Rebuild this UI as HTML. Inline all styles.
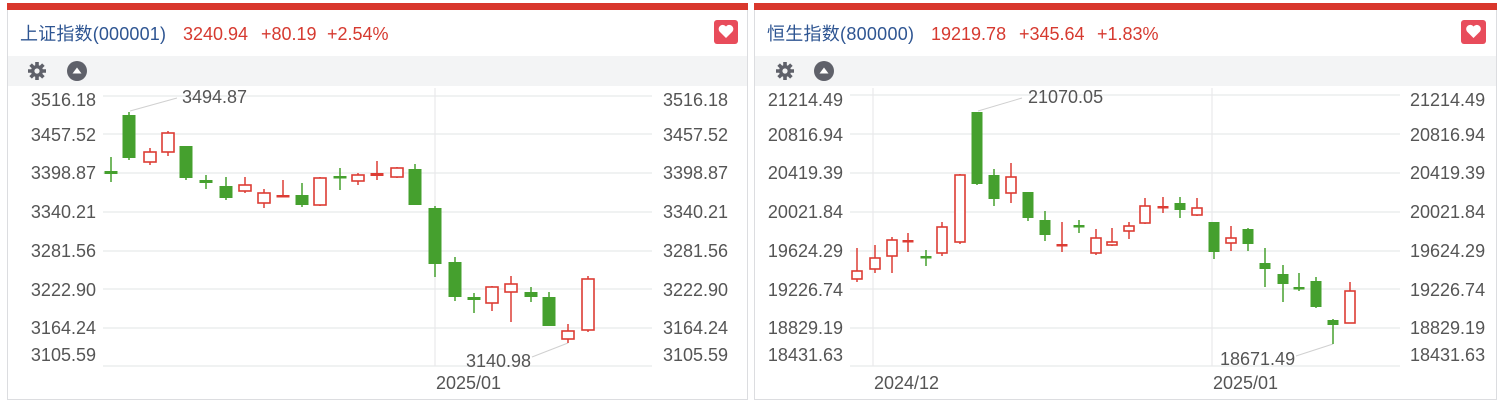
<!DOCTYPE html>
<html><head><meta charset="utf-8"><style>
body{margin:0;background:#fff;width:1500px;height:409px;overflow:hidden}
svg{display:block;font-family:"Liberation Sans","Noto Sans CJK SC",sans-serif}
.ax{font-size:18px;fill:#555}
.g{fill:#45a02e}
.w{stroke:#45a02e;stroke-width:1.5}
.r{fill:#fff;stroke:#dc3c34;stroke-width:1.6}
.rw{stroke:#dc3c34;stroke-width:1.5}
.grid{stroke:#e8e9eb;stroke-width:1.2}
.tt{font-size:18px;fill:#2e5592}
.tr{font-size:18px;fill:#d63a30}
</style></head><body>
<svg width="1500" height="409" viewBox="0 0 1500 409">
<defs>
<g id="gear"><circle r="6" fill="#5f616a"/><g stroke="#5f616a" stroke-width="3.6"><line x1="0" y1="-9" x2="0" y2="9"/><line x1="-9" y1="0" x2="9" y2="0"/><line x1="-6.4" y1="-6.4" x2="6.4" y2="6.4"/><line x1="-6.4" y1="6.4" x2="6.4" y2="-6.4"/></g><circle r="2.6" fill="#f3f4f5"/></g>
<g id="up"><circle r="10" fill="#5f616a"/><path d="M-4.5 2.5 L0 -3.5 L4.5 2.5 Z" fill="#fff"/></g>
</defs>
<rect x="7.5" y="4.5" width="740" height="395" fill="#fff" stroke="#dcdde0"/>
<rect x="754.5" y="4.5" width="742" height="395" fill="#fff" stroke="#dcdde0"/>
<rect x="7" y="3" width="741" height="7" fill="#d9372c"/>
<rect x="754" y="3" width="743" height="7" fill="#d9372c"/>
<rect x="8" y="56" width="739" height="30" fill="#f3f4f5"/>
<rect x="755" y="56" width="741" height="30" fill="#f3f4f5"/>
<use href="#gear" x="37" y="71"/><use href="#up" x="77" y="71"/>
<use href="#gear" x="785" y="71"/><use href="#up" x="824" y="71"/>
<text class="tt" x="20" y="40" textLength="146">上证指数(000001)</text>
<text class="tr" x="183" y="40">3240.94</text><text class="tr" x="261" y="40">+80.19</text><text class="tr" x="327" y="40">+2.54%</text>
<text class="tt" x="767" y="40" textLength="147">恒生指数(800000)</text>
<text class="tr" x="931" y="40">19219.78</text><text class="tr" x="1019" y="40">+345.64</text><text class="tr" x="1097" y="40">+1.83%</text>
<rect x="714" y="20" width="24" height="24" rx="3" fill="#e84c5b"/>
<path d="M726 38 L719.5 31.5 A3.6 3.6 0 0 1 726 26.5 A3.6 3.6 0 0 1 732.5 31.5 Z" fill="#fff"/>
<rect x="1461" y="20" width="25" height="24" rx="3" fill="#e84c5b"/>
<path d="M1473.5 38 L1467 31.5 A3.6 3.6 0 0 1 1473.5 26.5 A3.6 3.6 0 0 1 1480 31.5 Z" fill="#fff"/>

<g class="grid">
<line x1="103" y1="96" x2="652" y2="96"/><line x1="103" y1="134" x2="652" y2="134"/><line x1="103" y1="173" x2="652" y2="173"/><line x1="103" y1="212" x2="652" y2="212"/><line x1="103" y1="251" x2="652" y2="251"/><line x1="103" y1="289" x2="652" y2="289"/><line x1="103" y1="328" x2="652" y2="328"/><line x1="103" y1="366" x2="652" y2="366"/>
<line x1="435" y1="88" x2="435" y2="366"/>
</g>
<g class="ax" text-anchor="end">
<text x="96" y="106">3516.18</text><text x="96" y="141">3457.52</text><text x="96" y="179">3398.87</text><text x="96" y="218">3340.21</text><text x="96" y="257">3281.56</text><text x="96" y="296">3222.90</text><text x="96" y="334">3164.24</text><text x="96" y="361">3105.59</text>
</g>
<g class="ax">
<text x="663" y="106">3516.18</text><text x="663" y="141">3457.52</text><text x="663" y="179">3398.87</text><text x="663" y="218">3340.21</text><text x="663" y="257">3281.56</text><text x="663" y="296">3222.90</text><text x="663" y="334">3164.24</text><text x="663" y="361">3105.59</text>
<text x="436" y="389">2025/01</text>
<text x="182" y="103">3494.87</text>
<text x="466" y="367">3140.98</text>
</g>
<line x1="130" y1="111" x2="177" y2="98" stroke="#d0d0d0"/>
<line x1="568" y1="343" x2="532" y2="357" stroke="#d0d0d0"/>
<g>
<line class="w" x1="111" y1="157" x2="111" y2="182"/><rect class="g" x="104.5" y="171" width="13" height="3"/>
<line class="w" x1="129" y1="112" x2="129" y2="160"/><rect class="g" x="122.5" y="115" width="13" height="43"/>
<line class="rw" x1="150" y1="148" x2="150" y2="165"/><rect class="r" x="144" y="152" width="12" height="10"/>
<line class="rw" x1="168" y1="131" x2="168" y2="156"/><rect class="r" x="162" y="133" width="12" height="19"/>
<line class="w" x1="186" y1="146" x2="186" y2="180"/><rect class="g" x="179.5" y="146" width="13" height="32"/>
<line class="w" x1="206" y1="175" x2="206" y2="189"/><rect class="g" x="199.5" y="180" width="13" height="3"/>
<line class="w" x1="226" y1="177" x2="226" y2="200"/><rect class="g" x="219.5" y="186" width="13" height="12"/>
<line class="rw" x1="245" y1="177" x2="245" y2="193"/><rect class="r" x="239" y="185" width="12" height="6"/>
<line class="rw" x1="264" y1="189" x2="264" y2="208"/><rect class="r" x="258" y="193" width="12" height="10"/>
<line class="rw" x1="283" y1="180" x2="283" y2="197"/><rect x="276.5" y="195" width="13" height="2.5" fill="#dc3c34"/>
<line class="w" x1="302" y1="183" x2="302" y2="207"/><rect class="g" x="295.5" y="195" width="13" height="10"/>
<line class="rw" x1="320" y1="177" x2="320" y2="206"/><rect class="r" x="314" y="178" width="12" height="27"/>
<line class="w" x1="340" y1="168" x2="340" y2="190"/><rect class="g" x="333.5" y="176" width="13" height="2.5"/>
<line class="rw" x1="358" y1="173" x2="358" y2="185"/><rect class="r" x="352" y="175" width="12" height="6"/>
<line class="rw" x1="377" y1="161" x2="377" y2="180"/><rect x="370.5" y="173" width="13" height="3" fill="#dc3c34"/>
<line class="rw" x1="397" y1="167" x2="397" y2="178"/><rect class="r" x="391" y="168" width="12" height="9"/>
<line class="w" x1="415" y1="164" x2="415" y2="205"/><rect class="g" x="408.5" y="169" width="13" height="36"/>
<line class="w" x1="435" y1="206" x2="435" y2="277"/><rect class="g" x="428.5" y="208" width="13" height="56"/>
<line class="w" x1="455" y1="257" x2="455" y2="301"/><rect class="g" x="448.5" y="262" width="13" height="35"/>
<line class="w" x1="474" y1="293" x2="474" y2="313"/><rect class="g" x="467.5" y="297" width="13" height="3"/>
<line class="rw" x1="492" y1="286" x2="492" y2="311"/><rect class="r" x="486" y="287" width="12" height="16"/>
<line class="rw" x1="511" y1="276" x2="511" y2="322"/><rect class="r" x="505" y="284" width="12" height="8"/>
<line class="w" x1="531" y1="287" x2="531" y2="302"/><rect class="g" x="524.5" y="292" width="13" height="5"/>
<line class="w" x1="549" y1="292" x2="549" y2="326"/><rect class="g" x="542.5" y="297" width="13" height="29"/>
<line class="rw" x1="568" y1="324" x2="568" y2="343"/><rect class="r" x="562" y="331" width="12" height="8"/>
<line class="rw" x1="588" y1="276" x2="588" y2="332"/><rect class="r" x="582" y="279" width="12" height="51"/>
</g>

<g class="grid">
<line x1="850" y1="95" x2="1400" y2="95"/><line x1="850" y1="134" x2="1400" y2="134"/><line x1="850" y1="173" x2="1400" y2="173"/><line x1="850" y1="212" x2="1400" y2="212"/><line x1="850" y1="251" x2="1400" y2="251"/><line x1="850" y1="289" x2="1400" y2="289"/><line x1="850" y1="328" x2="1400" y2="328"/><line x1="850" y1="366" x2="1400" y2="366"/>
<line x1="873" y1="88" x2="873" y2="366"/><line x1="1212" y1="88" x2="1212" y2="366"/>
</g>
<g class="ax" text-anchor="end">
<text x="843" y="106">21214.49</text><text x="843" y="141">20816.94</text><text x="843" y="179">20419.39</text><text x="843" y="218">20021.84</text><text x="843" y="257">19624.29</text><text x="843" y="296">19226.74</text><text x="843" y="334">18829.19</text><text x="843" y="361">18431.63</text>
</g>
<g class="ax">
<text x="1410" y="106">21214.49</text><text x="1410" y="141">20816.94</text><text x="1410" y="179">20419.39</text><text x="1410" y="218">20021.84</text><text x="1410" y="257">19624.29</text><text x="1410" y="296">19226.74</text><text x="1410" y="334">18829.19</text><text x="1410" y="361">18431.63</text>
<text x="874" y="389">2024/12</text><text x="1213" y="389">2025/01</text>
<text x="1028" y="103">21070.05</text>
<text x="1220" y="365">18671.49</text>
</g>
<line x1="978" y1="111" x2="1022" y2="98" stroke="#d0d0d0"/>
<line x1="1333" y1="344" x2="1296" y2="356" stroke="#d0d0d0"/>
<g>
<line class="rw" x1="857" y1="248" x2="857" y2="282"/><rect class="r" x="852" y="271" width="10" height="8"/>
<line class="rw" x1="875" y1="245" x2="875" y2="273"/><rect class="r" x="870" y="258" width="10" height="11"/>
<line class="rw" x1="892" y1="237" x2="892" y2="273"/><rect class="r" x="887" y="240" width="10" height="16"/>
<line class="rw" x1="908" y1="233" x2="908" y2="252"/><rect x="902.5" y="240" width="11" height="2.5" fill="#dc3c34"/>
<line class="w" x1="926" y1="250" x2="926" y2="266"/><rect class="g" x="920.5" y="256" width="11" height="2.5"/>
<line class="rw" x1="942" y1="222" x2="942" y2="256"/><rect class="r" x="937" y="227" width="10" height="26"/>
<line class="rw" x1="960" y1="174" x2="960" y2="244"/><rect class="r" x="955" y="175" width="10" height="67"/>
<line class="w" x1="977" y1="112" x2="977" y2="185"/><rect class="g" x="971.5" y="112" width="11" height="72"/>
<line class="w" x1="994" y1="169" x2="994" y2="206"/><rect class="g" x="988.5" y="175" width="11" height="24"/>
<line class="rw" x1="1011" y1="163" x2="1011" y2="203"/><rect class="r" x="1006" y="177" width="10" height="16"/>
<line class="w" x1="1028" y1="192" x2="1028" y2="221"/><rect class="g" x="1022.5" y="192" width="11" height="26"/>
<line class="w" x1="1045" y1="211" x2="1045" y2="241"/><rect class="g" x="1039.5" y="220" width="11" height="15"/>
<line class="rw" x1="1062" y1="222" x2="1062" y2="252"/><rect x="1056.5" y="244" width="11" height="2.5" fill="#dc3c34"/>
<line class="w" x1="1079" y1="220" x2="1079" y2="233"/><rect class="g" x="1073.5" y="225" width="11" height="2.5"/>
<line class="rw" x1="1096" y1="229" x2="1096" y2="255"/><rect class="r" x="1091" y="238" width="10" height="15"/>
<line class="rw" x1="1112" y1="228" x2="1112" y2="246"/><rect class="r" x="1107" y="242" width="10" height="3"/>
<line class="rw" x1="1129" y1="222" x2="1129" y2="239"/><rect class="r" x="1124" y="226" width="10" height="5"/>
<line class="rw" x1="1145" y1="198" x2="1145" y2="224"/><rect class="r" x="1140" y="206" width="10" height="17"/>
<line class="rw" x1="1163" y1="197" x2="1163" y2="213"/><rect x="1157.5" y="206" width="11" height="2.5" fill="#dc3c34"/>
<line class="w" x1="1180" y1="197" x2="1180" y2="218"/><rect class="g" x="1174.5" y="203" width="11" height="7"/>
<line class="rw" x1="1197" y1="198" x2="1197" y2="216"/><rect class="r" x="1192" y="208" width="10" height="7"/>
<line class="w" x1="1214" y1="222" x2="1214" y2="259"/><rect class="g" x="1208.5" y="222" width="11" height="30"/>
<line class="rw" x1="1231" y1="226" x2="1231" y2="251"/><rect class="r" x="1226" y="238" width="10" height="5"/>
<line class="w" x1="1248" y1="228" x2="1248" y2="251"/><rect class="g" x="1242.5" y="229" width="11" height="15"/>
<line class="w" x1="1265" y1="248" x2="1265" y2="287"/><rect class="g" x="1259.5" y="263" width="11" height="6"/>
<line class="w" x1="1283" y1="265" x2="1283" y2="302"/><rect class="g" x="1277.5" y="274" width="11" height="10"/>
<line class="w" x1="1299" y1="273" x2="1299" y2="291"/><rect class="g" x="1293.5" y="287" width="11" height="2.5"/>
<line class="w" x1="1316" y1="277" x2="1316" y2="308"/><rect class="g" x="1310.5" y="281" width="11" height="26"/>
<line class="w" x1="1333" y1="319" x2="1333" y2="344"/><rect class="g" x="1327.5" y="320" width="11" height="5"/>
<line class="rw" x1="1350" y1="282" x2="1350" y2="323"/><rect class="r" x="1345" y="291" width="10" height="32"/>
</g>
</svg>
</body></html>
